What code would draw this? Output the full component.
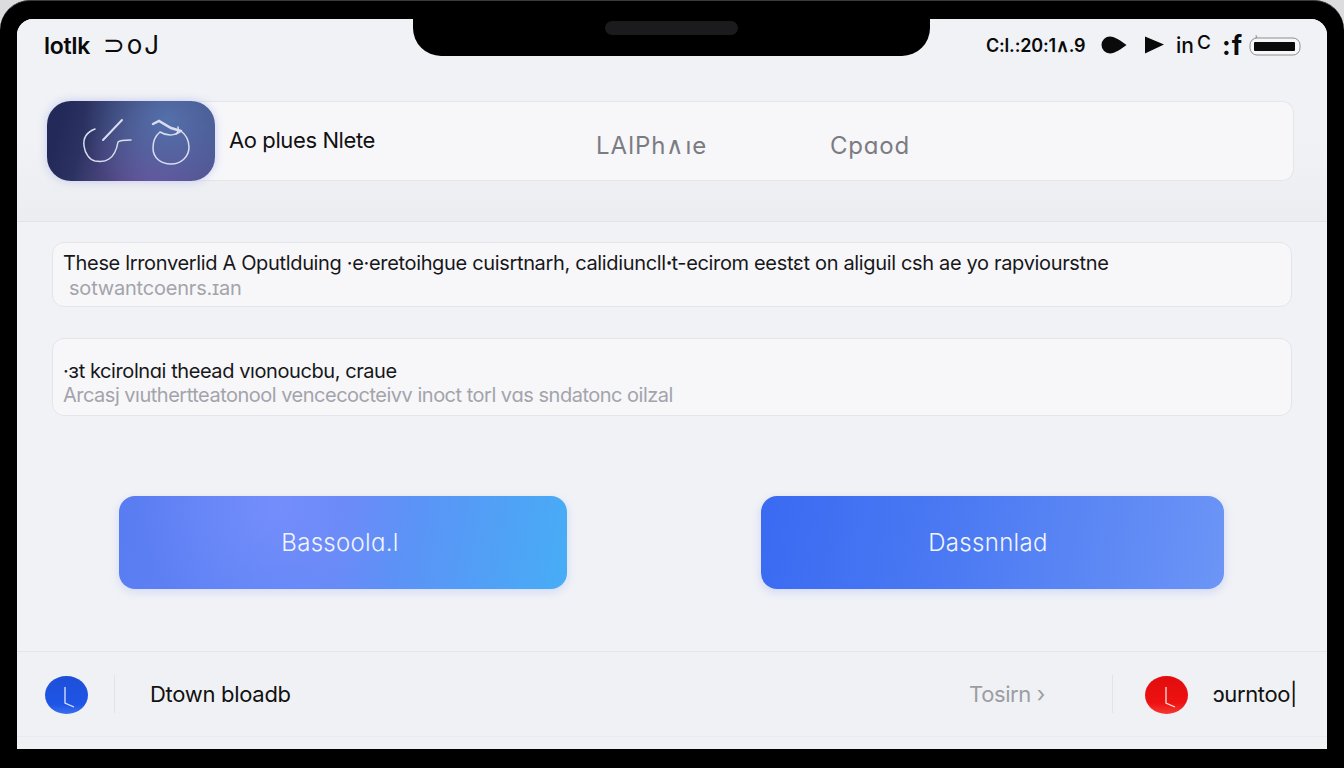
<script lang="ts">
  const rows = [
    {
      title: 'These lrronverlid A Oputlduing ·e·eretoihgue cuisrtnarh, calidiuncllꞏt-ecirom  eestɛt on aliguil csh ae yo rapviourstne',
      sub: 'sotwantcoenrs.ɪan'
    },
    {
      title: '·ɜt kcirolnɑi theead vıonoucbu, craue',
      sub: 'Arcasj vıuthertteatonool vencecocteivv inoct torl vɑs sndatonc oilzal'
    }
  ];
</script>

<div class="frame">
  <div class="screen">
    <div class="notch"><span class="speaker"></span></div>

    <section class="top">
      <header class="status">
        <div class="clock">lotIk <span class="clock-b">⊃oJ</span></div>
        <div class="indicators">
          <span class="time">C:l.:20:1∧.9</span>
          <svg class="drop" width="26" height="18" viewBox="0 0 26 18">
            <path d="M9 0.500c5 0 11 4.500 16.500 8.500c-5.500 4-11.500 8.500-16.500 8.500a8.500 8.500 0 0 1 0-17z" fill="#0a0a0a" />
          </svg>
          <svg class="play" width="19" height="18" viewBox="0 0 19 18">
            <path d="M0 0.500l19 8-19 9z" fill="#0a0a0a" />
          </svg>
          <span class="net">in<span class="net-c">C</span></span>
          <span class="carrier">:f</span>
          <svg class="battery" width="52" height="22" viewBox="0 0 52 22">
            <path d="M8 2.500c-1 1.500-4 3.500-6 7" fill="none" stroke="#9a9a9e" />
            <path d="M7 1l1 5" fill="none" stroke="#9a9a9e" />
            <rect x="1" y="4" width="50" height="17" rx="7" fill="#f7f7f9" stroke="#8e8e93" />
            <rect x="5" y="8" width="41" height="9" rx="1" fill="#0a0a0a" />
          </svg>
        </div>
      </header>

      <div class="app-card">
        <div class="logo">
          <svg width="168" height="80" viewBox="0 0 168 80" fill="none" stroke="#d9deee" stroke-width="1.500" stroke-linecap="round">
            <path d="M48 28c-8 3-12 9-11 17c1 8 6 14 11 15c6 1 10 1 14-2c6-4 8-11 9-17c2-2 7-2 13-2" />
            <path d="M56 39l19-20" stroke-width="2" />
            <path d="M113 31c-5 4-7 10-7 16c0 10 8 16 18 16c10 0 18-7 18-17c0-7-3-12-8-16c-4 4-13 6-21 1z" />
            <path d="M106 23l6-3l12 7l10 3" stroke-width="2.500" />
            <path d="M131 26c1 3 0 5-2 7" />
          </svg>
        </div>
        <div class="app-name">Ao plues Nlete</div>
        <div class="app-meta">LAlPh∧ıe</div>
        <div class="app-meta second">Cpɑod</div>
      </div>
    </section>

    <main class="content">
      <div class="note first">
        <p class="note-title">{rows[0].title}</p>
        <p class="note-sub indent">{rows[0].sub}</p>
      </div>
      <div class="note second-note">
        <p class="note-title short">{rows[1].title}</p>
        <p class="note-sub">{rows[1].sub}</p>
      </div>

      <div class="actions">
        <button class="btn btn-light">Bassoolɑ.l</button>
        <button class="btn btn-strong">Dassnnlad</button>
      </div>
    </main>

    <footer class="bottom">
      <div class="bottom-row">
        <span class="dot blue">
          <svg width="43" height="38" viewBox="0 0 43 38" fill="none" stroke="#dfe6ff" stroke-width="1.300">
            <path d="M20 11v16l9 4" />
          </svg>
        </span>
        <span class="divider"></span>
        <span class="bottom-label">Dtown bloadb</span>
        <span class="bottom-link">Tosirn ›</span>
        <span class="divider right"></span>
        <span class="dot red">
          <svg width="43" height="38" viewBox="0 0 43 38" fill="none" stroke="#ffe1dc" stroke-width="1.300">
            <path d="M21 11v16l9 4" />
          </svg>
        </span>
        <span class="bottom-tail">ɔurntoo|</span>
      </div>
    </footer>
  </div>
</div>

<style>
  :global(body) {
    margin: 0;
    background: #dcdcde;
  }

  .frame {
    width: 1344px;
    height: 768px;
    box-sizing: border-box;
    padding: 19px 17px;
    background: #000;
    border-radius: 30px 30px 0 0;
    border-top: 1px solid #3a3a3a;
    font-family: Inter, 'Liberation Sans', sans-serif;
    overflow: hidden;
  }

  .screen {
    position: relative;
    height: 730px;
    margin-top: -1px;
    display: flex;
    flex-direction: column;
    background: #f0f1f5;
    border-radius: 16px 16px 0 0;
    overflow: hidden;
  }

  .notch {
    position: absolute;
    top: 0;
    left: 396px;
    width: 517px;
    height: 37px;
    background: #000;
    border-radius: 0 0 28px 28px;
    display: flex;
    justify-content: center;
  }

  .speaker {
    width: 133px;
    height: 14px;
    margin-top: 2px;
    border-radius: 7px;
    background: #1b1b1d;
  }

  .top {
    height: 203px;
    box-sizing: border-box;
    padding-bottom: 41px;
    border-bottom: 1px solid #e3e4e8;
    background: linear-gradient(#f1f2f6 60%, #ecedf0);
    display: flex;
    flex-direction: column;
    flex: none;
  }

  .status {
    height: 82px;
    box-sizing: border-box;
    padding: 13px 26px 0 27px;
    display: flex;
    justify-content: space-between;
    align-items: flex-start;
    flex: none;
  }

  .clock {
    font-size: 23px;
    line-height: 26px;
    font-weight: 600;
    color: #0a0a0a;
    letter-spacing: -0.3px;
    white-space: nowrap;
  }

  .clock-b {
    font-size: 26px;
    font-weight: 400;
    letter-spacing: 2px;
    margin-left: 7px;
  }

  .indicators {
    display: flex;
    align-items: center;
    height: 26px;
    color: #0a0a0a;
  }

  .time {
    width: 103px;
    font-size: 18px;
    font-weight: 600;
    letter-spacing: -0.2px;
    white-space: nowrap;
  }

  .drop {
    margin-left: 12px;
  }

  .play {
    margin-left: 18px;
  }

  .net {
    margin-left: 12px;
    width: 38px;
    font-size: 21px;
    font-weight: 500;
    white-space: nowrap;
  }

  .net-c {
    font-size: 19px;
    margin-left: 3px;
    position: relative;
    top: -4px;
  }

  .carrier {
    margin-left: 8px;
    width: 27px;
    font-size: 26px;
    font-weight: 700;
    letter-spacing: 1px;
  }

  .app-card {
    margin: 0 33px 0 30px;
    height: 80px;
    flex: none;
    display: flex;
    align-items: center;
    background: #f7f7fa;
    border: 1px solid #e5e6ea;
    border-left: 0;
    border-radius: 24px 12px 12px 24px;
    box-sizing: border-box;
  }

  .logo {
    width: 168px;
    height: 80px;
    flex: none;
    border-radius: 24px;
    background:
      radial-gradient(circle at 72% 25%, #5470ac 0%, rgba(84, 112, 172, 0) 62%),
      radial-gradient(circle at 65% 105%, #6a4f9b 0%, rgba(106, 79, 155, 0) 60%),
      linear-gradient(105deg, #232a5a 10%, #3f4673 55%, #47568f);
    box-shadow: 0 0 10px rgba(90, 110, 220, 0.3);
  }

  .logo svg {
    display: block;
  }

  .app-name {
    margin-left: 14px;
    width: 367px;
    font-size: 22px;
    letter-spacing: -0.4px;
    color: #111;
    white-space: nowrap;
    margin-top: -2px;
  }

  .app-meta {
    width: 234px;
    font-size: 24px;
    color: #7b7c82;
    letter-spacing: 1px;
    white-space: nowrap;
    margin-top: 8px;
  }

  .app-meta.second {
    width: auto;
    letter-spacing: 0.8px;
  }

  .content {
    flex: 1;
    box-sizing: border-box;
    padding: 20px 35px 0;
    display: flex;
    flex-direction: column;
    background: #f1f2f6;
  }

  .note {
    box-sizing: border-box;
    background: #f7f7fa;
    border: 1px solid #e4e5e9;
    border-radius: 12px;
    padding: 0 10px;
  }

  .note.first {
    height: 65px;
    padding-top: 8px;
  }

  .note.first .note-sub {
    margin-top: 1px;
  }

  .second-note {
    height: 78px;
    margin-top: 31px;
    padding-top: 20px;
  }

  .note p {
    margin: 0;
    white-space: nowrap;
    line-height: 24px;
  }

  .note-title {
    font-size: 20px;
    letter-spacing: -0.34px;
    color: #17171a;
  }

  .note-title.short {
    letter-spacing: -0.42px;
  }

  .note-sub {
    font-size: 20px;
    letter-spacing: -0.5px;
    color: #a3a4aa;
  }

  .note-sub.indent {
    margin-left: 6px !important;
    letter-spacing: -0.2px;
  }

  .actions {
    margin-top: 80px;
    padding-left: 67px;
    display: flex;
    gap: 194px;
  }

  .btn {
    height: 93px;
    border: 0;
    border-radius: 16px;
    color: #f1f5ff;
    font-family: inherit;
    font-size: 24px;
    font-weight: 300;
    letter-spacing: 0.3px;
  }

  .btn-light {
    width: 448px;
    padding: 0 6px 0 0;
    background:
      radial-gradient(circle at 35% 10%, rgba(125, 145, 255, 0.7), rgba(125, 145, 255, 0) 45%),
      linear-gradient(100deg, #5a7cf2 0%, #6389f6 50%, #47adf6 100%);
    box-shadow: 0 3px 10px rgba(90, 130, 240, 0.2);
  }

  .btn-strong {
    width: 463px;
    padding: 0 9px 0 0;
    background: linear-gradient(100deg, #3a6af2 0%, #4d7bf3 45%, #6c95f6 100%);
    box-shadow: 0 3px 10px rgba(70, 110, 240, 0.2);
  }

  .bottom {
    height: 98px;
    flex: none;
    box-sizing: border-box;
    border-top: 1px solid #e4e5e9;
    padding-bottom: 12px;
    background: #f0f1f4;
  }

  .bottom-row {
    height: 85px;
    box-sizing: border-box;
    border-bottom: 1px solid #e9eaee;
    padding: 0 30px 0 28px;
    display: flex;
    align-items: center;
  }

  .dot {
    width: 43px;
    height: 38px;
    border-radius: 50%;
    flex: none;
    margin-top: 1px;
  }

  .dot svg {
    display: block;
  }

  .blue {
    background: linear-gradient(#1d4fd8, #1f55e6 75%, #3a6ff0);
  }

  .red {
    background: linear-gradient(#e20d0d, #ee1111 70%, #f43a32);
  }

  .divider {
    width: 1px;
    height: 38px;
    background: #e2e3e7;
    flex: none;
    margin-left: 26px;
  }

  .bottom-label {
    margin-left: 35px;
    font-size: 22px;
    letter-spacing: -0.3px;
    color: #111;
    white-space: nowrap;
  }

  .bottom-link {
    margin-left: auto;
    font-size: 22px;
    letter-spacing: -0.4px;
    color: #9c9da2;
    white-space: nowrap;
  }

  .divider.right {
    margin-left: 67px;
    margin-right: 32px;
  }

  .bottom-tail {
    margin-left: 25px;
    font-size: 22px;
    letter-spacing: -0.38px;
    color: #111;
    white-space: nowrap;
  }
</style>
